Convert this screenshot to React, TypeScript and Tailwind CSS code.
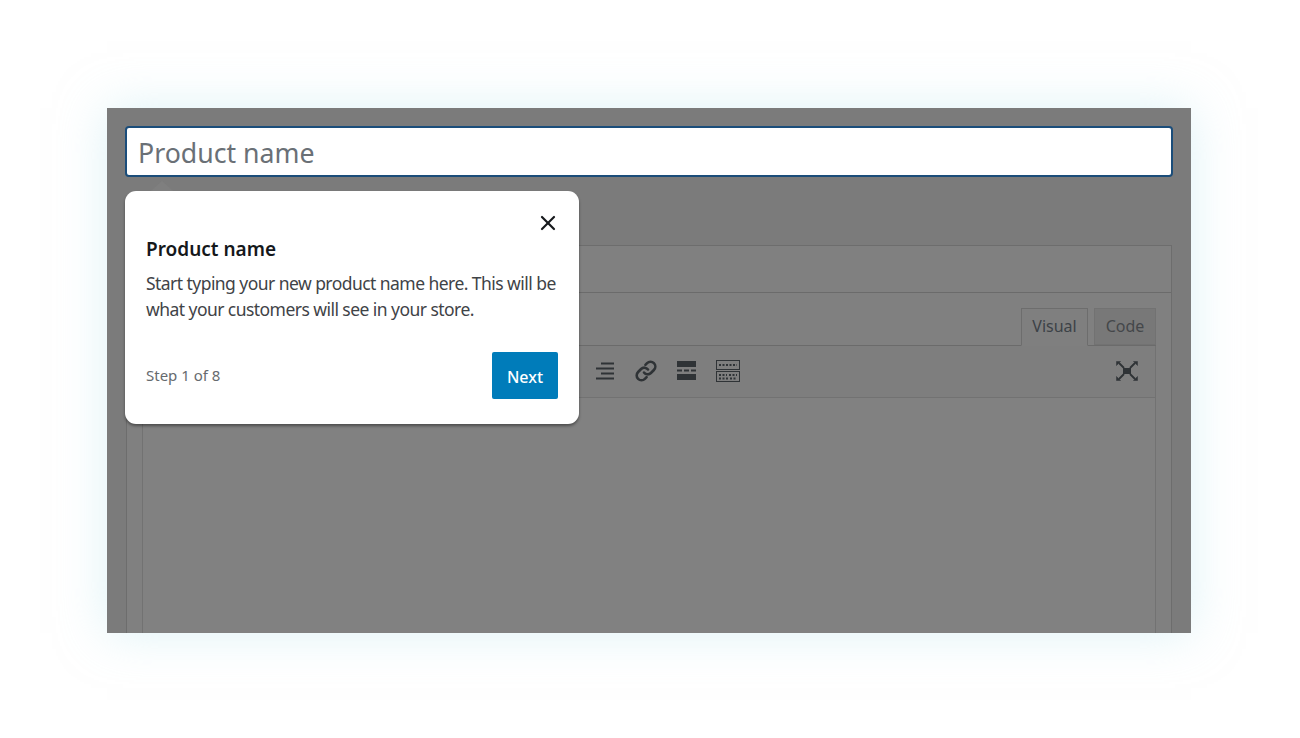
import React from "react";
import { X } from "lucide-react";

const font = { fontFamily: '"Noto Sans", "Liberation Sans", sans-serif' };

function AlignRightIcon() {
  return (
    <svg width="20" height="18" viewBox="0 0 20 18" fill="none" stroke="#2f3336" strokeWidth="2">
      <path d="M6 2h13M1 7h18M6 12h13M1 17h18" transform="translate(0 -0.5)" />
    </svg>
  );
}

function LinkIcon() {
  return (
    <svg width="24" height="24" viewBox="0 0 24 24" fill="none" stroke="#2f3336" strokeWidth="2.6" strokeLinecap="round" strokeLinejoin="round">
      <path d="M10 13.5a4.6 4.6 0 0 0 6.9.5l3-3a4.8 4.8 0 0 0-6.8-6.8l-1.7 1.7" />
      <path d="M14 10.5a4.6 4.6 0 0 0-6.9-.5l-3 3a4.8 4.8 0 0 0 6.800 6.800l1.700-1.700" />
    </svg>
  );
}

function MoreIcon() {
  return (
    <svg width="19" height="19" viewBox="0 0 19 19" fill="#2f3336">
      <rect x="0" y="0" width="19" height="6" />
      <rect x="0" y="8.500" width="5" height="2" />
      <rect x="7" y="8.500" width="5" height="2" />
      <rect x="14" y="8.500" width="5" height="2" />
      <rect x="0" y="13" width="19" height="6" />
    </svg>
  );
}

function KeyboardIcon() {
  return (
    <svg width="24" height="22" viewBox="0 0 24 22" fill="none" stroke="#2f3336">
      <rect x="0.5" y="0.5" width="23" height="9" />
      <rect x="0.5" y="11.5" width="23" height="10" />
      <path d="M3 5h18M3 15h8M13 15h8M14 18.500h7M3 18.500h9" strokeWidth="2" strokeDasharray="2 1.500" />
    </svg>
  );
}

function FullscreenIcon() {
  return (
    <svg width="22" height="20" viewBox="0 0 22 20" fill="#2f3336" stroke="#2f3336">
      <rect x="7" y="7" width="8" height="6" stroke="none" />
      <path d="M3 2l5 5M19 2l-5 5M3 18l5-5M19 18l-5-5" strokeWidth="1.800" fill="none" />
      <path d="M0.500 0.500h4l-4 4zM21.500 0.500h-4l4 4zM0.500 19.500h4l-4-4zM21.500 19.500h-4l4-4z" strokeWidth="0.500" />
    </svg>
  );
}

export default function App() {
  return (
    <div className="h-[738px] w-[1300px] overflow-hidden bg-white pl-[107px] pt-[108px]" style={font}>
      <div className="relative h-[525px] w-[1084px] bg-[#7b7b7b] shadow-[0_0_45px_rgba(190,232,240,0.5)]">
        <div className="h-full overflow-hidden px-[18px] pt-[18px]">
          {/* title input */}
          <div className="flex h-[51px] items-center rounded-[4px] border-2 border-[#1b4d7a] bg-white pl-[11px] pt-[3px] text-[26.700px] text-[#6a7076]">
            Product name
          </div>

          {/* description panel */}
          <div className="mx-[1px] mt-[68px] h-[500px] border border-[#6d6d6d] bg-[#808080]">
            <div className="h-[47px] border-b border-[#6b6b6b]" />
            <div className="mx-[15px] h-[440px]">
              <div className="flex h-[53px] items-end justify-end border-b border-[#6b6b6b] pt-[15px]">
                <div className="relative -mb-px flex h-[38px] w-[67px] items-center justify-center border border-[#6d6d6d] border-b-[#7f7f7f] bg-[#7f7f7f] pb-[2px] text-[16px] text-[#3c4247]">
                  Visual
                </div>
                <div className="ml-[6px] flex h-[37px] w-[62px] items-center justify-center border border-[#727272] bg-[#787878] pb-[2px] text-[16px] text-[#44474a]">
                  Code
                </div>
              </div>
              <div className="flex h-[52px] items-center border-x border-b border-[#727272] bg-[#7e7e7e] pb-[2px] pl-[452px] pr-[17px]">
                <AlignRightIcon />
                <div className="ml-[19px]"><LinkIcon /></div>
                <div className="ml-[19px]"><MoreIcon /></div>
                <div className="ml-[20px]"><KeyboardIcon /></div>
                <div className="ml-auto"><FullscreenIcon /></div>
              </div>
              <div className="h-[300px] border-x border-[#727272] bg-[#818181]" />
            </div>
          </div>
        </div>

        {/* tour popover */}
        <div className="absolute left-[18px] top-[83px] h-[233px] w-[454px] rounded-[11px] bg-white px-[21px] shadow-[0_2px_3px_rgba(0,0,0,0.4)]">
          <div className="absolute -top-[10px] left-[26px] h-0 w-0 border-x-[11px] border-b-[10px] border-x-transparent border-b-[#7f7f7f]" />
          <div className="flex h-[44px] items-end justify-end">
            <X size={24} strokeWidth={2.2} className="-mr-[2px] text-[#16191c]" />
          </div>
          <div className="mt-[2px] text-[19px] leading-[24px] font-semibold text-[#15181b]">Product name</div>
          <p className="mt-[9px] text-[17.500px] leading-[26px] tracking-[-0.55px] text-[#3f4347]">
            Start typing your new product name here. This will be what your customers will see in your store.
          </p>
          <div className="mt-[30px] flex items-center justify-between">
            <span className="text-[15px] text-[#666a6e]">Step 1 of 8</span>
            <button className="flex h-[47px] w-[66px] items-center justify-center rounded-[2px] bg-[#007cba] pt-[3px] text-[16px] font-medium text-white">
              Next
            </button>
          </div>
        </div>
      </div>
    </div>
  );
}
